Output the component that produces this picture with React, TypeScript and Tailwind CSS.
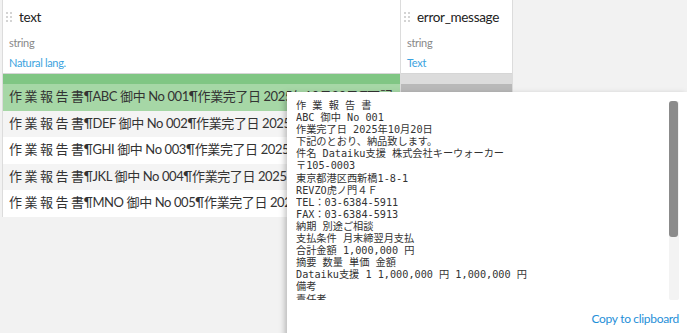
import React from 'react';

const rows = [
  { code: 'ABC', no: '001' },
  { code: 'DEF', no: '002' },
  { code: 'GHI', no: '003' },
  { code: 'JKL', no: '004' },
  { code: 'MNO', no: '005' },
];

const popupText = `作 業 報 告 書
ABC 御中 No 001
作業完了日 2025年10月20日
下記のとおり、納品致します。
件名 Dataiku支援 株式会社キーウォーカー
〒105-0003
東京都港区西新橋1-8-1
REVZO虎ノ門４Ｆ
TEL：03-6384-5911
FAX：03-6384-5913
納期 別途ご相談
支払条件 月末締翌月支払
合計金額 1,000,000 円
摘要 数量 単価 金額
Dataiku支援 1 1,000,000 円 1,000,000 円
備考
責任者
担当者`;

function Handle() {
  return (
    <svg width="6" height="10" viewBox="0 0 6 10" className="shrink-0">
      {[0, 4, 8].map((y) =>
        [0, 4].map((x) => <rect key={`${x}-${y}`} x={x} y={y} width="2" height="2" fill="#d4d4d4" />)
      )}
    </svg>
  );
}

function ColumnHeader({ name, kind, meaning }: { name: string; kind: string; meaning: string }) {
  return (
    <div className="h-[73px] bg-white flex flex-col">
      <div className="h-[34px] flex items-center pl-[3px] gap-[7px]">
        <Handle />
        <span className="text-[13.5px] text-[#222]">{name}</span>
      </div>
      <div className="h-[19px] flex items-center pl-[6px] text-[11px] text-[#888]">{kind}</div>
      <div className="h-[20px] flex items-center pl-[6px] text-[11px] text-[#3ba3e0]">{meaning}</div>
    </div>
  );
}

export default function App() {
  return (
    <div
      className="relative w-[687px] h-[333px] overflow-hidden bg-[#f2f2f2] tracking-[-0.02em]"
      style={{ fontFamily: 'Lato, "Noto Sans CJK JP", sans-serif' }}
    >
      {/* Table */}
      <div className="flex ml-[2px] w-fit">
        <div className="w-[399px] border-l border-r border-[#dcdcdc] flex flex-col">
          <ColumnHeader name="text" kind="string" meaning="Natural lang." />
          <div className="h-[11px] bg-[#80c684] border-t border-[#d6d6d6]" />
          {rows.map((r, i) => (
            <div
              key={r.code}
              className={`h-[26.5px] leading-[24px] pl-[6px] overflow-hidden whitespace-nowrap text-[13px] text-[#333] tracking-[-0.4px] ${
                i === 0 ? 'bg-[#a6d7a6]' : i % 2 === 1 ? 'bg-[#f4f4f4]' : 'bg-white'
              }`}
            >
              作 業 報 告 書¶{r.code} 御中 No {r.no}¶作業完了日 2025年10月20日¶下記
            </div>
          ))}
        </div>
        <div className="w-[112px] border-r border-[#dcdcdc] flex flex-col">
          <ColumnHeader name="error_message" kind="string" meaning="Text" />
          <div className="h-[11px] bg-[#dcdcdc] border-t border-[#d6d6d6]" />
          {rows.map((r, i) => (
            <div
              key={r.code}
              className={`h-[26.5px] ${i === 0 ? 'bg-[#b9b9b9]' : i % 2 === 1 ? 'bg-[#f4f4f4]' : 'bg-white'}`}
            />
          ))}
        </div>
      </div>

      {/* Cell value popup */}
      <div className="absolute left-[287px] top-[92px] w-[400px] h-[260px] bg-white shadow-[-2px_2px_6px_rgba(0,0,0,0.25)] pt-[4px] pl-[9px] pr-[8px]">
        <div className="flex gap-[4px]">
          <pre
            className="flex-1 h-[204px] overflow-hidden pt-[4px] text-[10.2px] leading-[12.1px] text-[#333] whitespace-pre tracking-normal"
            style={{ fontFamily: '"DejaVu Sans Mono", "Noto Sans CJK JP", monospace' }}
          >
            {popupText}
          </pre>
          <div className="w-[10px] h-[199px] mt-[5px] bg-[#f3f3f3] rounded-[2px]">
            <div className="w-[9px] h-[136px] bg-[#8b8b8b] rounded-[3px]" />
          </div>
        </div>
        <div className="mt-[11px] flex justify-end">
          <span className="text-[12px] leading-[16px] text-[#1f8fd8]">Copy to clipboard</span>
        </div>
      </div>
    </div>
  );
}
